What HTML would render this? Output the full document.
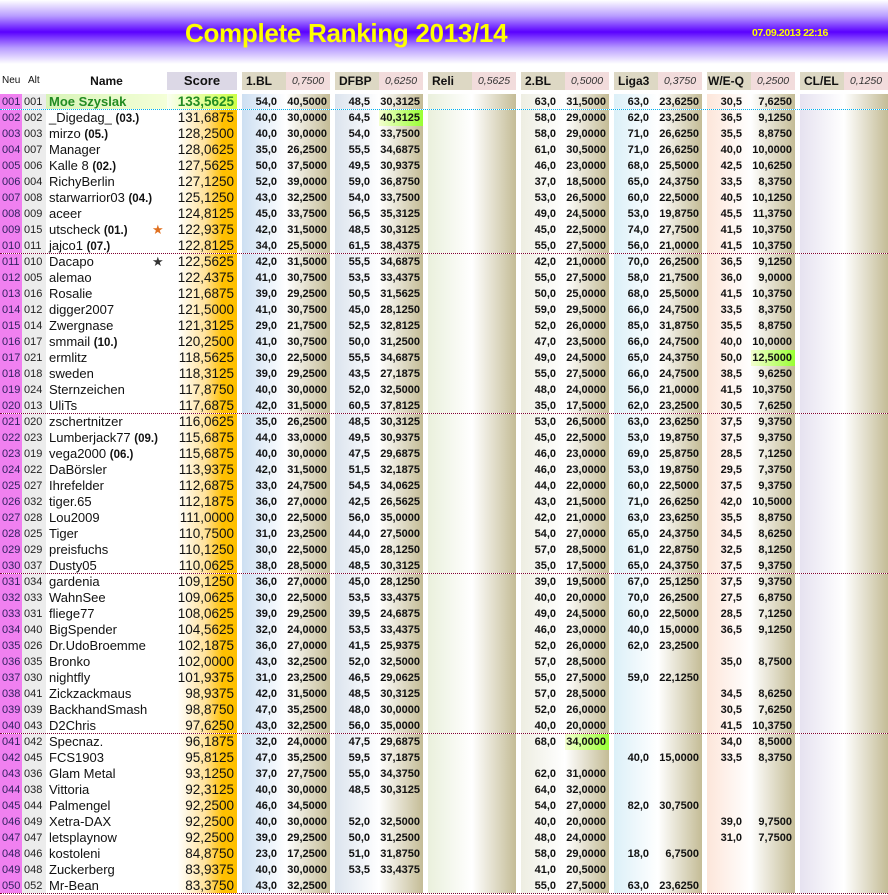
<!DOCTYPE html>
<html><head><meta charset="utf-8"><style>
body{margin:0;width:888px;height:895px;overflow:hidden;background:#fff;font-family:"Liberation Sans",sans-serif;position:relative}
#top{position:absolute;left:0;top:0;width:888px;height:64px;background:linear-gradient(180deg,#fff 0%,#b89cff 25%,#5a00ff 50%,#b89cff 75%,#fff 100%)}
#title{position:absolute;left:185px;top:18px;font-size:26px;font-weight:bold;color:#ffff00;letter-spacing:-0.3px}
#date{position:absolute;left:752px;top:27px;font-size:10.5px;font-weight:bold;color:#ffff00;letter-spacing:-0.4px}
.r{position:absolute;left:0;width:888px;height:16px}
.r u{position:absolute;top:0;height:16px;line-height:16px;text-decoration:none;white-space:nowrap;overflow:hidden;box-sizing:border-box;font-size:11px;font-weight:bold;text-align:right;color:#111}
.r u:nth-child(1){left:0;width:22px;background:#f080f0;text-align:left;padding-left:2px;font-weight:normal;color:#302060}
.r u:nth-child(2){left:22px;width:24px;background:#ececec;text-align:left;padding-left:2px;font-weight:normal;color:#222}
.r u:nth-child(3){left:46px;width:121px;text-align:left;padding-left:3px;font-weight:normal;font-size:13px;color:#111}
.r u:nth-child(4){left:167px;width:70px;background:linear-gradient(90deg,#fff 0%,#fff 15%,#ffe29a 55%,#ffc000 80%);font-weight:normal;font-size:13.5px;padding-right:3px;color:#111}
.r u:nth-child(odd){padding-right:9px}
.r u:nth-child(1),.r u:nth-child(3){padding-right:0}
.r u:nth-child(5){left:242px;width:44px;background:linear-gradient(90deg,#cddff2,#fff)}
.r u:nth-child(6){left:286px;width:44px;background:linear-gradient(90deg,#fff,#c4bc96);padding-right:3px}
.r u:nth-child(7){left:335px;width:44px;background:linear-gradient(90deg,#dce4ee,#fff)}
.r u:nth-child(8){left:379px;width:44px;background:linear-gradient(90deg,#fff,#c4bc96);padding-right:3px}
.r u:nth-child(9){left:428px;width:44px;background:linear-gradient(90deg,#eaf0dc,#fff)}
.r u:nth-child(10){left:472px;width:44px;background:linear-gradient(90deg,#fff,#c4bc96);padding-right:3px}
.r u:nth-child(11){left:521px;width:44px;background:linear-gradient(90deg,#eeeee2,#fff)}
.r u:nth-child(12){left:565px;width:44px;background:linear-gradient(90deg,#fff,#c4bc96);padding-right:3px}
.r u:nth-child(13){left:614px;width:44px;background:linear-gradient(90deg,#dcf0f8,#fff)}
.r u:nth-child(14){left:658px;width:44px;background:linear-gradient(90deg,#fff,#c4bc96);padding-right:3px}
.r u:nth-child(15){left:707px;width:44px;background:linear-gradient(90deg,#fde6da,#fff)}
.r u:nth-child(16){left:751px;width:44px;background:linear-gradient(90deg,#fff,#c4bc96);padding-right:3px}
.r u:nth-child(17){left:800px;width:44px;background:linear-gradient(90deg,#e6e2f0,#fff)}
.r u:nth-child(18){left:844px;width:44px;background:linear-gradient(90deg,#fff,#c4bc96);padding-right:3px}
.r u.g{background:linear-gradient(90deg,#f4ffd0,#99ff33)!important}
.r b{font-weight:bold;font-size:11.5px}
.r.sep{border-bottom:1px dotted #800030;height:15px}
.r.sep u{height:15px}
.r.c1{border-bottom:1px dotted #00b0f0;height:15px}
.r.c1 u{height:15px}
.r.c1 u:nth-child(3){background:linear-gradient(90deg,#d8f4b8,#f4ffd8);color:#228b22;font-weight:bold}
.r.c1 u:nth-child(4){background:linear-gradient(90deg,#fafff0,#ccff44);color:#228b22;font-weight:bold}
.st{position:absolute;left:106px;font-size:13px}
#hd{position:absolute;top:72px;left:0;width:888px;height:18px}
#hd div{position:absolute;top:0;height:18px;line-height:18px;font-size:12px;font-weight:bold;color:#111;white-space:nowrap;box-sizing:border-box}
#hd .k{background:#ddd8c4;width:44px;padding-left:4px}
#hd .f{background:#f2dcdc;width:44px;font-style:italic;font-weight:normal;font-size:10.5px;text-align:center;color:#333}
</style></head><body>
<div id="top"></div>
<div id="title">Complete Ranking 2013/14</div>
<div id="date">07.09.2013 22:16</div>
<div id="hd">
<div style="left:2px;font-weight:normal;font-size:10px">Neu</div>
<div style="left:28px;font-weight:normal;font-size:10px">Alt</div>
<div style="left:46px;width:121px;text-align:center">Name</div>
<div style="left:167px;width:70px;background:#dcd8e6;text-align:center;font-size:13px">Score</div>
<div class="k" style="left:242px">1.BL</div><div class="f" style="left:286px">0,7500</div>
<div class="k" style="left:335px">DFBP</div><div class="f" style="left:379px">0,6250</div>
<div class="k" style="left:428px">Reli</div><div class="f" style="left:472px">0,5625</div>
<div class="k" style="left:521px">2.BL</div><div class="f" style="left:565px">0,5000</div>
<div class="k" style="left:614px">Liga3</div><div class="f" style="left:658px">0,3750</div>
<div class="k" style="left:707px;padding-left:1px">W/E-Q</div><div class="f" style="left:751px">0,2500</div>
<div class="k" style="left:800px">CL/EL</div><div class="f" style="left:844px">0,1250</div>
</div>

<div class="r c1" style="top:94px"><u>001</u><u>001</u><u>Moe Szyslak</u><u>133,5625</u><u>54,0</u><u>40,5000</u><u>48,5</u><u>30,3125</u><u></u><u></u><u>63,0</u><u>31,5000</u><u>63,0</u><u>23,6250</u><u>30,5</u><u>7,6250</u><u></u><u></u></div>
<div class="r" style="top:110px"><u>002</u><u>002</u><u>_Digedag_ <b>(03.)</b></u><u>131,6875</u><u>40,0</u><u>30,0000</u><u>64,5</u><u class="g">40,3125</u><u></u><u></u><u>58,0</u><u>29,0000</u><u>62,0</u><u>23,2500</u><u>36,5</u><u>9,1250</u><u></u><u></u></div>
<div class="r" style="top:126px"><u>003</u><u>003</u><u>mirzo <b>(05.)</b></u><u>128,2500</u><u>40,0</u><u>30,0000</u><u>54,0</u><u>33,7500</u><u></u><u></u><u>58,0</u><u>29,0000</u><u>71,0</u><u>26,6250</u><u>35,5</u><u>8,8750</u><u></u><u></u></div>
<div class="r" style="top:142px"><u>004</u><u>007</u><u>Manager</u><u>128,0625</u><u>35,0</u><u>26,2500</u><u>55,5</u><u>34,6875</u><u></u><u></u><u>61,0</u><u>30,5000</u><u>71,0</u><u>26,6250</u><u>40,0</u><u>10,0000</u><u></u><u></u></div>
<div class="r" style="top:158px"><u>005</u><u>006</u><u>Kalle 8 <b>(02.)</b></u><u>127,5625</u><u>50,0</u><u>37,5000</u><u>49,5</u><u>30,9375</u><u></u><u></u><u>46,0</u><u>23,0000</u><u>68,0</u><u>25,5000</u><u>42,5</u><u>10,6250</u><u></u><u></u></div>
<div class="r" style="top:174px"><u>006</u><u>004</u><u>RichyBerlin</u><u>127,1250</u><u>52,0</u><u>39,0000</u><u>59,0</u><u>36,8750</u><u></u><u></u><u>37,0</u><u>18,5000</u><u>65,0</u><u>24,3750</u><u>33,5</u><u>8,3750</u><u></u><u></u></div>
<div class="r" style="top:190px"><u>007</u><u>008</u><u>starwarrior03 <b>(04.)</b></u><u>125,1250</u><u>43,0</u><u>32,2500</u><u>54,0</u><u>33,7500</u><u></u><u></u><u>53,0</u><u>26,5000</u><u>60,0</u><u>22,5000</u><u>40,5</u><u>10,1250</u><u></u><u></u></div>
<div class="r" style="top:206px"><u>008</u><u>009</u><u>aceer</u><u>124,8125</u><u>45,0</u><u>33,7500</u><u>56,5</u><u>35,3125</u><u></u><u></u><u>49,0</u><u>24,5000</u><u>53,0</u><u>19,8750</u><u>45,5</u><u>11,3750</u><u></u><u></u></div>
<div class="r" style="top:222px"><u>009</u><u>015</u><u>utscheck <b>(01.)</b><span class="st" style="color:#e07020">★</span></u><u>122,9375</u><u>42,0</u><u>31,5000</u><u>48,5</u><u>30,3125</u><u></u><u></u><u>45,0</u><u>22,5000</u><u>74,0</u><u>27,7500</u><u>41,5</u><u>10,3750</u><u></u><u></u></div>
<div class="r sep" style="top:238px"><u>010</u><u>011</u><u>jajco1 <b>(07.)</b></u><u>122,8125</u><u>34,0</u><u>25,5000</u><u>61,5</u><u>38,4375</u><u></u><u></u><u>55,0</u><u>27,5000</u><u>56,0</u><u>21,0000</u><u>41,5</u><u>10,3750</u><u></u><u></u></div>
<div class="r" style="top:254px"><u>011</u><u>010</u><u>Dacapo<span class="st" style="color:#333">★</span></u><u>122,5625</u><u>42,0</u><u>31,5000</u><u>55,5</u><u>34,6875</u><u></u><u></u><u>42,0</u><u>21,0000</u><u>70,0</u><u>26,2500</u><u>36,5</u><u>9,1250</u><u></u><u></u></div>
<div class="r" style="top:270px"><u>012</u><u>005</u><u>alemao</u><u>122,4375</u><u>41,0</u><u>30,7500</u><u>53,5</u><u>33,4375</u><u></u><u></u><u>55,0</u><u>27,5000</u><u>58,0</u><u>21,7500</u><u>36,0</u><u>9,0000</u><u></u><u></u></div>
<div class="r" style="top:286px"><u>013</u><u>016</u><u>Rosalie</u><u>121,6875</u><u>39,0</u><u>29,2500</u><u>50,5</u><u>31,5625</u><u></u><u></u><u>50,0</u><u>25,0000</u><u>68,0</u><u>25,5000</u><u>41,5</u><u>10,3750</u><u></u><u></u></div>
<div class="r" style="top:302px"><u>014</u><u>012</u><u>digger2007</u><u>121,5000</u><u>41,0</u><u>30,7500</u><u>45,0</u><u>28,1250</u><u></u><u></u><u>59,0</u><u>29,5000</u><u>66,0</u><u>24,7500</u><u>33,5</u><u>8,3750</u><u></u><u></u></div>
<div class="r" style="top:318px"><u>015</u><u>014</u><u>Zwergnase</u><u>121,3125</u><u>29,0</u><u>21,7500</u><u>52,5</u><u>32,8125</u><u></u><u></u><u>52,0</u><u>26,0000</u><u>85,0</u><u>31,8750</u><u>35,5</u><u>8,8750</u><u></u><u></u></div>
<div class="r" style="top:334px"><u>016</u><u>017</u><u>smmail <b>(10.)</b></u><u>120,2500</u><u>41,0</u><u>30,7500</u><u>50,0</u><u>31,2500</u><u></u><u></u><u>47,0</u><u>23,5000</u><u>66,0</u><u>24,7500</u><u>40,0</u><u>10,0000</u><u></u><u></u></div>
<div class="r" style="top:350px"><u>017</u><u>021</u><u>ermlitz</u><u>118,5625</u><u>30,0</u><u>22,5000</u><u>55,5</u><u>34,6875</u><u></u><u></u><u>49,0</u><u>24,5000</u><u>65,0</u><u>24,3750</u><u>50,0</u><u class="g">12,5000</u><u></u><u></u></div>
<div class="r" style="top:366px"><u>018</u><u>018</u><u>sweden</u><u>118,3125</u><u>39,0</u><u>29,2500</u><u>43,5</u><u>27,1875</u><u></u><u></u><u>55,0</u><u>27,5000</u><u>66,0</u><u>24,7500</u><u>38,5</u><u>9,6250</u><u></u><u></u></div>
<div class="r" style="top:382px"><u>019</u><u>024</u><u>Sternzeichen</u><u>117,8750</u><u>40,0</u><u>30,0000</u><u>52,0</u><u>32,5000</u><u></u><u></u><u>48,0</u><u>24,0000</u><u>56,0</u><u>21,0000</u><u>41,5</u><u>10,3750</u><u></u><u></u></div>
<div class="r sep" style="top:398px"><u>020</u><u>013</u><u>UliTs</u><u>117,6875</u><u>42,0</u><u>31,5000</u><u>60,5</u><u>37,8125</u><u></u><u></u><u>35,0</u><u>17,5000</u><u>62,0</u><u>23,2500</u><u>30,5</u><u>7,6250</u><u></u><u></u></div>
<div class="r" style="top:414px"><u>021</u><u>020</u><u>zschertnitzer</u><u>116,0625</u><u>35,0</u><u>26,2500</u><u>48,5</u><u>30,3125</u><u></u><u></u><u>53,0</u><u>26,5000</u><u>63,0</u><u>23,6250</u><u>37,5</u><u>9,3750</u><u></u><u></u></div>
<div class="r" style="top:430px"><u>022</u><u>023</u><u>Lumberjack77 <b>(09.)</b></u><u>115,6875</u><u>44,0</u><u>33,0000</u><u>49,5</u><u>30,9375</u><u></u><u></u><u>45,0</u><u>22,5000</u><u>53,0</u><u>19,8750</u><u>37,5</u><u>9,3750</u><u></u><u></u></div>
<div class="r" style="top:446px"><u>023</u><u>019</u><u>vega2000 <b>(06.)</b></u><u>115,6875</u><u>40,0</u><u>30,0000</u><u>47,5</u><u>29,6875</u><u></u><u></u><u>46,0</u><u>23,0000</u><u>69,0</u><u>25,8750</u><u>28,5</u><u>7,1250</u><u></u><u></u></div>
<div class="r" style="top:462px"><u>024</u><u>022</u><u>DaBörsler</u><u>113,9375</u><u>42,0</u><u>31,5000</u><u>51,5</u><u>32,1875</u><u></u><u></u><u>46,0</u><u>23,0000</u><u>53,0</u><u>19,8750</u><u>29,5</u><u>7,3750</u><u></u><u></u></div>
<div class="r" style="top:478px"><u>025</u><u>027</u><u>Ihrefelder</u><u>112,6875</u><u>33,0</u><u>24,7500</u><u>54,5</u><u>34,0625</u><u></u><u></u><u>44,0</u><u>22,0000</u><u>60,0</u><u>22,5000</u><u>37,5</u><u>9,3750</u><u></u><u></u></div>
<div class="r" style="top:494px"><u>026</u><u>032</u><u>tiger.65</u><u>112,1875</u><u>36,0</u><u>27,0000</u><u>42,5</u><u>26,5625</u><u></u><u></u><u>43,0</u><u>21,5000</u><u>71,0</u><u>26,6250</u><u>42,0</u><u>10,5000</u><u></u><u></u></div>
<div class="r" style="top:510px"><u>027</u><u>028</u><u>Lou2009</u><u>111,0000</u><u>30,0</u><u>22,5000</u><u>56,0</u><u>35,0000</u><u></u><u></u><u>42,0</u><u>21,0000</u><u>63,0</u><u>23,6250</u><u>35,5</u><u>8,8750</u><u></u><u></u></div>
<div class="r" style="top:526px"><u>028</u><u>025</u><u>Tiger</u><u>110,7500</u><u>31,0</u><u>23,2500</u><u>44,0</u><u>27,5000</u><u></u><u></u><u>54,0</u><u>27,0000</u><u>65,0</u><u>24,3750</u><u>34,5</u><u>8,6250</u><u></u><u></u></div>
<div class="r" style="top:542px"><u>029</u><u>029</u><u>preisfuchs</u><u>110,1250</u><u>30,0</u><u>22,5000</u><u>45,0</u><u>28,1250</u><u></u><u></u><u>57,0</u><u>28,5000</u><u>61,0</u><u>22,8750</u><u>32,5</u><u>8,1250</u><u></u><u></u></div>
<div class="r sep" style="top:558px"><u>030</u><u>037</u><u>Dusty05</u><u>110,0625</u><u>38,0</u><u>28,5000</u><u>48,5</u><u>30,3125</u><u></u><u></u><u>35,0</u><u>17,5000</u><u>65,0</u><u>24,3750</u><u>37,5</u><u>9,3750</u><u></u><u></u></div>
<div class="r" style="top:574px"><u>031</u><u>034</u><u>gardenia</u><u>109,1250</u><u>36,0</u><u>27,0000</u><u>45,0</u><u>28,1250</u><u></u><u></u><u>39,0</u><u>19,5000</u><u>67,0</u><u>25,1250</u><u>37,5</u><u>9,3750</u><u></u><u></u></div>
<div class="r" style="top:590px"><u>032</u><u>033</u><u>WahnSee</u><u>109,0625</u><u>30,0</u><u>22,5000</u><u>53,5</u><u>33,4375</u><u></u><u></u><u>40,0</u><u>20,0000</u><u>70,0</u><u>26,2500</u><u>27,5</u><u>6,8750</u><u></u><u></u></div>
<div class="r" style="top:606px"><u>033</u><u>031</u><u>fliege77</u><u>108,0625</u><u>39,0</u><u>29,2500</u><u>39,5</u><u>24,6875</u><u></u><u></u><u>49,0</u><u>24,5000</u><u>60,0</u><u>22,5000</u><u>28,5</u><u>7,1250</u><u></u><u></u></div>
<div class="r" style="top:622px"><u>034</u><u>040</u><u>BigSpender</u><u>104,5625</u><u>32,0</u><u>24,0000</u><u>53,5</u><u>33,4375</u><u></u><u></u><u>46,0</u><u>23,0000</u><u>40,0</u><u>15,0000</u><u>36,5</u><u>9,1250</u><u></u><u></u></div>
<div class="r" style="top:638px"><u>035</u><u>026</u><u>Dr.UdoBroemme</u><u>102,1875</u><u>36,0</u><u>27,0000</u><u>41,5</u><u>25,9375</u><u></u><u></u><u>52,0</u><u>26,0000</u><u>62,0</u><u>23,2500</u><u></u><u></u><u></u><u></u></div>
<div class="r" style="top:654px"><u>036</u><u>035</u><u>Bronko</u><u>102,0000</u><u>43,0</u><u>32,2500</u><u>52,0</u><u>32,5000</u><u></u><u></u><u>57,0</u><u>28,5000</u><u></u><u></u><u>35,0</u><u>8,7500</u><u></u><u></u></div>
<div class="r" style="top:670px"><u>037</u><u>030</u><u>nightfly</u><u>101,9375</u><u>31,0</u><u>23,2500</u><u>46,5</u><u>29,0625</u><u></u><u></u><u>55,0</u><u>27,5000</u><u>59,0</u><u>22,1250</u><u></u><u></u><u></u><u></u></div>
<div class="r" style="top:686px"><u>038</u><u>041</u><u>Zickzackmaus</u><u>98,9375</u><u>42,0</u><u>31,5000</u><u>48,5</u><u>30,3125</u><u></u><u></u><u>57,0</u><u>28,5000</u><u></u><u></u><u>34,5</u><u>8,6250</u><u></u><u></u></div>
<div class="r" style="top:702px"><u>039</u><u>039</u><u>BackhandSmash</u><u>98,8750</u><u>47,0</u><u>35,2500</u><u>48,0</u><u>30,0000</u><u></u><u></u><u>52,0</u><u>26,0000</u><u></u><u></u><u>30,5</u><u>7,6250</u><u></u><u></u></div>
<div class="r sep" style="top:718px"><u>040</u><u>043</u><u>D2Chris</u><u>97,6250</u><u>43,0</u><u>32,2500</u><u>56,0</u><u>35,0000</u><u></u><u></u><u>40,0</u><u>20,0000</u><u></u><u></u><u>41,5</u><u>10,3750</u><u></u><u></u></div>
<div class="r" style="top:734px"><u>041</u><u>042</u><u>Specnaz.</u><u>96,1875</u><u>32,0</u><u>24,0000</u><u>47,5</u><u>29,6875</u><u></u><u></u><u>68,0</u><u class="g">34,0000</u><u></u><u></u><u>34,0</u><u>8,5000</u><u></u><u></u></div>
<div class="r" style="top:750px"><u>042</u><u>045</u><u>FCS1903</u><u>95,8125</u><u>47,0</u><u>35,2500</u><u>59,5</u><u>37,1875</u><u></u><u></u><u></u><u></u><u>40,0</u><u>15,0000</u><u>33,5</u><u>8,3750</u><u></u><u></u></div>
<div class="r" style="top:766px"><u>043</u><u>036</u><u>Glam Metal</u><u>93,1250</u><u>37,0</u><u>27,7500</u><u>55,0</u><u>34,3750</u><u></u><u></u><u>62,0</u><u>31,0000</u><u></u><u></u><u></u><u></u><u></u><u></u></div>
<div class="r" style="top:782px"><u>044</u><u>038</u><u>Vittoria</u><u>92,3125</u><u>40,0</u><u>30,0000</u><u>48,5</u><u>30,3125</u><u></u><u></u><u>64,0</u><u>32,0000</u><u></u><u></u><u></u><u></u><u></u><u></u></div>
<div class="r" style="top:798px"><u>045</u><u>044</u><u>Palmengel</u><u>92,2500</u><u>46,0</u><u>34,5000</u><u></u><u></u><u></u><u></u><u>54,0</u><u>27,0000</u><u>82,0</u><u>30,7500</u><u></u><u></u><u></u><u></u></div>
<div class="r" style="top:814px"><u>046</u><u>049</u><u>Xetra-DAX</u><u>92,2500</u><u>40,0</u><u>30,0000</u><u>52,0</u><u>32,5000</u><u></u><u></u><u>40,0</u><u>20,0000</u><u></u><u></u><u>39,0</u><u>9,7500</u><u></u><u></u></div>
<div class="r" style="top:830px"><u>047</u><u>047</u><u>letsplaynow</u><u>92,2500</u><u>39,0</u><u>29,2500</u><u>50,0</u><u>31,2500</u><u></u><u></u><u>48,0</u><u>24,0000</u><u></u><u></u><u>31,0</u><u>7,7500</u><u></u><u></u></div>
<div class="r" style="top:846px"><u>048</u><u>046</u><u>kostoleni</u><u>84,8750</u><u>23,0</u><u>17,2500</u><u>51,0</u><u>31,8750</u><u></u><u></u><u>58,0</u><u>29,0000</u><u>18,0</u><u>6,7500</u><u></u><u></u><u></u><u></u></div>
<div class="r" style="top:862px"><u>049</u><u>048</u><u>Zuckerberg</u><u>83,9375</u><u>40,0</u><u>30,0000</u><u>53,5</u><u>33,4375</u><u></u><u></u><u>41,0</u><u>20,5000</u><u></u><u></u><u></u><u></u><u></u><u></u></div>
<div class="r sep" style="top:878px"><u>050</u><u>052</u><u>Mr-Bean</u><u>83,3750</u><u>43,0</u><u>32,2500</u><u></u><u></u><u></u><u></u><u>55,0</u><u>27,5000</u><u>63,0</u><u>23,6250</u><u></u><u></u><u></u><u></u></div>
</body></html>
